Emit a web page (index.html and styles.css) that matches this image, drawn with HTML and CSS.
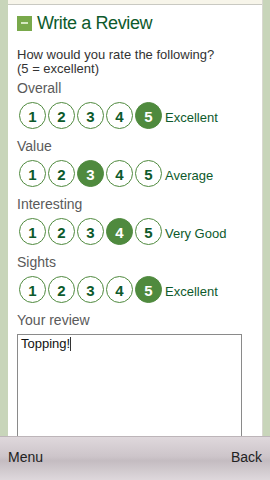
FILE: index.html
```html
<!DOCTYPE html>
<html>
<head>
<meta charset="utf-8">
<link rel="stylesheet" href="styles.css">
</head>
<body>
<div class="screen">
  <div class="content">
    <div class="panel">
      <div class="topstrip"></div>
      <h1 class="heading"><span class="toggle"><span class="minus"></span></span>Write a Review</h1>
      <p class="intro">How would you rate the following?<br>(5 = excellent)</p>

      <div class="group">
        <div class="label">Overall</div>
        <div class="rating">
          <span class="dot">1</span><span class="dot">2</span><span class="dot">3</span><span class="dot">4</span><span class="dot on">5</span><span class="word">Excellent</span>
        </div>
      </div>
      <div class="group">
        <div class="label">Value</div>
        <div class="rating">
          <span class="dot">1</span><span class="dot">2</span><span class="dot on">3</span><span class="dot">4</span><span class="dot">5</span><span class="word">Average</span>
        </div>
      </div>
      <div class="group">
        <div class="label">Interesting</div>
        <div class="rating">
          <span class="dot">1</span><span class="dot">2</span><span class="dot">3</span><span class="dot on">4</span><span class="dot">5</span><span class="word">Very Good</span>
        </div>
      </div>
      <div class="group">
        <div class="label">Sights</div>
        <div class="rating">
          <span class="dot">1</span><span class="dot">2</span><span class="dot">3</span><span class="dot">4</span><span class="dot on">5</span><span class="word">Excellent</span>
        </div>
      </div>
      <div class="label review-label">Your review</div>
      <div class="textbox">Topping!<span class="caret"></span></div>
    </div>
  </div>
  <div class="softkeys">
    <span>Menu</span>
    <span>Back</span>
  </div>
</div>
</body>
</html>
```

FILE: styles.css
```css
* { box-sizing: border-box; }
html, body { margin: 0; padding: 0; }
body {
  font-family: "Liberation Sans", Arial, sans-serif;
  background: #c8d5ba;
}
.screen {
  width: 270px;
  height: 480px;
  display: flex;
  flex-direction: column;
  overflow: hidden;
}
.content {
  flex: 1;
  min-height: 0;
  padding: 0 7px 0 8px;
  background: #c8d5ba;
  overflow: hidden;
}
.panel {
  background: #ffffff;
  height: 100%;
  border-right: 1px solid #d8d8d0;
  padding: 0 0 0 9px;
  overflow: hidden;
}
.topstrip {
  height: 5px;
  margin-left: -9px;
  background: #f7f5ea;
  border-bottom: 1px solid #c9c9c2;
}
.heading {
  display: flex;
  align-items: center;
  margin: 10px 0 0 0;
  height: 16px;
  font-size: 18px;
  font-weight: normal;
  color: #0d5a2c;
  letter-spacing: -0.4px;
}
.toggle {
  width: 15px;
  height: 15px;
  background: #79a94b;
  margin-right: 5px;
  display: flex;
  align-items: center;
  justify-content: center;
}
.minus {
  width: 7px;
  height: 2px;
  background: #d5e8c0;
}
.intro {
  margin: 17px 0 0 0;
  font-size: 13px;
  line-height: 14px;
  color: #333333;
}
.group { margin-top: 4px; }
.group + .group { margin-top: 9px; }
.label {
  font-size: 14px;
  line-height: 16px;
  color: #5a5a5a;
}
.rating {
  display: flex;
  align-items: center;
  gap: 2px;
  margin-top: 6px;
  margin-left: 2px;
}
.dot {
  width: 27px;
  height: 27px;
  border-radius: 50%;
  border: 1.5px solid #4f8a3e;
  background: #fff;
  color: #0d5a2c;
  font-weight: bold;
  font-size: 15px;
  display: flex;
  align-items: center;
  justify-content: center;
  padding-top: 2px;
}
.dot.on {
  background: #4f8a3e;
  color: #ffffff;
}
.word {
  margin-left: 1px;
  margin-top: 4px;
  font-size: 13px;
  color: #0d5a2c;
}
.review-label { margin-top: 9px; }
.textbox {
  margin-top: 6px;
  width: 225px;
  height: 120px;
  border: 1px solid #8a8a8a;
  font-size: 13px;
  color: #111;
  padding: 1px 3px;
}
.caret {
  display: inline-block;
  width: 1px;
  height: 14px;
  background: #333;
  vertical-align: -3px;
}
.softkeys {
  height: 44px;
  display: flex;
  justify-content: space-between;
  align-items: center;
  padding: 0 8px 4px 8px;
  background: linear-gradient(#dfd8dc 0%, #cdc5ca 45%, #c4bcc1 55%, #ded8dc 100%);
  border-top: 1px solid #bdb5b9;
  font-size: 14px;
  color: #222;
}
```
